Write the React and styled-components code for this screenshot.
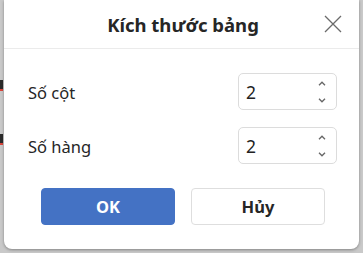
import React, { useState } from 'react'
import styled, { createGlobalStyle } from 'styled-components'

const GlobalStyle = createGlobalStyle`
    html, body {
        margin: 0;
        padding: 0;
        background: #cdcdcd;
        font-family: "Noto Sans", "Open Sans", sans-serif;
    }
`

const Page = styled.div`
    position: relative;
    width: 363px;
    height: 253px;
    overflow: hidden;
    background: #c9c9c9;
`

const DocStrip = styled.div`
    display: flex;
    flex-direction: column;
    padding-top: 80px;
    gap: 43px;
    width: 4px;
`

const DocWord = styled.div`
    height: 9px;
    width: 3px;
    background: #2a2a2a;
    border-bottom: 2px solid #d9443a;
`

const Dialog = styled.div`
    position: absolute;
    left: 4px;
    top: 0;
    width: 355px;
    height: 249px;
    background: #fff;
    border-radius: 0 0 8px 8px;
    box-shadow: 0 1px 3px rgba(0, 0, 0, 0.35);
    display: flex;
    flex-direction: column;
`

const Header = styled.div`
    height: 48px;
    border-bottom: 1px solid #ebebeb;
    display: flex;
    align-items: center;
    justify-content: center;
    position: relative;
`

const Title = styled.h1`
    margin: 0;
    margin-left: 3px;
    font-size: 18.5px;
    font-weight: 700;
    color: #262626;
`

const CloseButton = styled.button`
    position: absolute;
    right: 17px;
    top: 15px;
    width: 18px;
    height: 18px;
    padding: 0;
    border: none;
    background: none;
    display: flex;
    cursor: pointer;
`

const Body = styled.div`
    display: flex;
    flex-direction: column;
    padding: 24px 22px 0 24px;
    gap: 17px;
`

const Row = styled.div`
    display: flex;
    align-items: center;
    justify-content: space-between;
`

const Label = styled.span`
    font-size: 16.5px;
    color: #262626;
    margin-top: 2px;
`

const Spin = styled.div`
    width: 99px;
    height: 37px;
    box-sizing: border-box;
    border: 1px solid #dcdcdc;
    border-radius: 5px;
    display: flex;
    align-items: center;
    padding-left: 7px;
    padding-right: 10px;
`

const SpinValue = styled.span`
    flex: 1;
    font-size: 17.5px;
    color: #222;
`

const Arrows = styled.div`
    display: flex;
    flex-direction: column;
    gap: 12px;
    color: #666;
`

const Buttons = styled.div`
    display: flex;
    justify-content: center;
    gap: 16px;
    padding: 24px 0 0 3px;
`

const Button = styled.button`
    width: 134px;
    height: 37px;
    border-radius: 4px;
    font-family: inherit;
    font-size: 16.5px;
    font-weight: 700;
    cursor: pointer;
    border: 1px solid ${props => props.primary ? '#4472c4' : '#dedede'};
    background: ${props => props.primary ? '#4472c4' : '#fff'};
    color: ${props => props.primary ? '#fff' : '#262626'};
`

const Chevron = ({ up }) => (
    <svg width="8" height="5" viewBox="0 0 8 5">
        <path
            d={up ? 'M1 4.2 L4 1.2 L7 4.2' : 'M1 0.8 L4 3.8 L7 0.8'}
            fill="none"
            stroke="currentColor"
            strokeWidth="1.3"
        />
    </svg>
)

const SpinBox = ({ value }) => (
    <Spin>
        <SpinValue>{value}</SpinValue>
        <Arrows>
            <Chevron up />
            <Chevron />
        </Arrows>
    </Spin>
)

const App = () => {
    const [cols] = useState(2)
    const [rows] = useState(2)

    return (
        <Page>
            <GlobalStyle />
            <DocStrip>
                <DocWord />
                <DocWord />
            </DocStrip>
            <Dialog>
                <Header>
                    <Title>Kích thước bảng</Title>
                    <CloseButton aria-label="Đóng">
                        <svg width="18" height="18" viewBox="0 0 18 18">
                            <path d="M1 1 L17 17 M17 1 L1 17" stroke="#6b6b6b" strokeWidth="1.3" />
                        </svg>
                    </CloseButton>
                </Header>
                <Body>
                    <Row>
                        <Label>Số cột</Label>
                        <SpinBox value={cols} />
                    </Row>
                    <Row>
                        <Label>Số hàng</Label>
                        <SpinBox value={rows} />
                    </Row>
                </Body>
                <Buttons>
                    <Button primary>OK</Button>
                    <Button>Hủy</Button>
                </Buttons>
            </Dialog>
        </Page>
    )
}

export default App
